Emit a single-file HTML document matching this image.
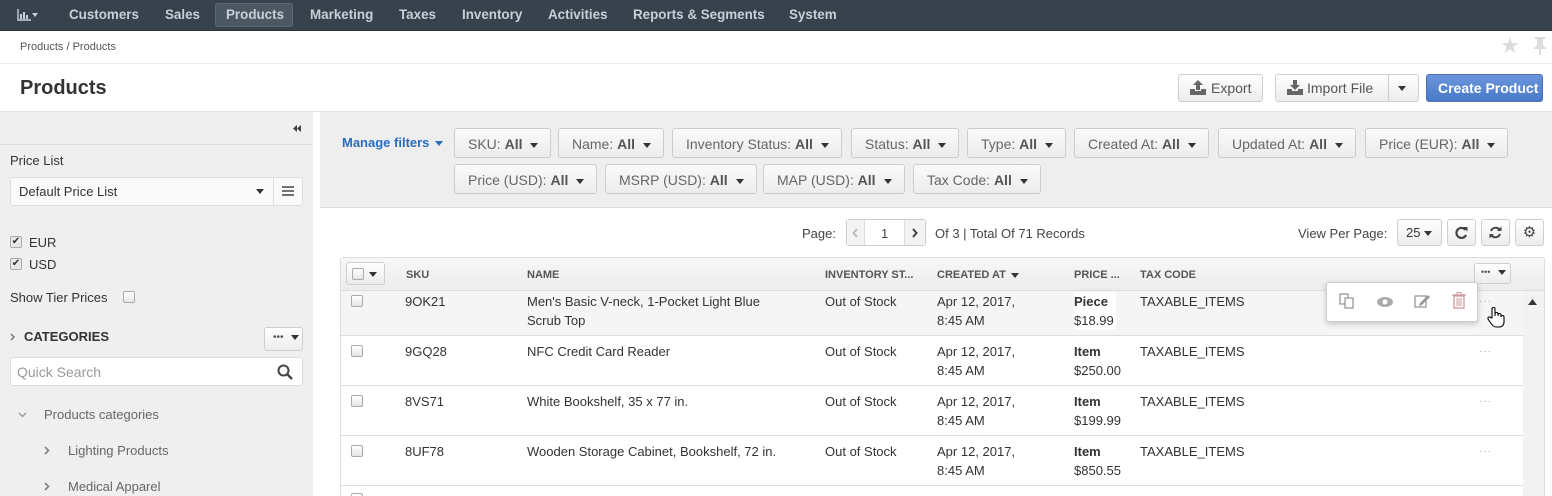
<!DOCTYPE html>
<html><head><meta charset="utf-8"><style>
*{box-sizing:border-box;margin:0;padding:0}
html,body{width:1552px;height:496px;overflow:hidden}
body{font-family:"Liberation Sans",Arial,sans-serif;font-size:13px;color:#444;background:#fff;position:relative}
.a{position:absolute;white-space:nowrap}
.nav{left:0;top:0;width:1552px;height:31px;background:#37424c;border-bottom:1px solid #2a333b}
.ni{position:absolute;top:7px;font-weight:bold;font-size:13.4px;color:#c6d0da}
.btn{position:absolute;border:1px solid #cfcfcf;border-radius:3px;background:linear-gradient(#fff,#ececec);color:#555;font-size:14px}
.flt{position:absolute;height:30px;border:1px solid #ccc;border-radius:3px;background:linear-gradient(#fafafa,#ececec);font-size:14px;color:#666;padding:7px 12px 0 13px}
.flt b{color:#555}
.car{display:inline-block;width:0;height:0;border-left:4px solid transparent;border-right:4px solid transparent;border-top:5px solid #333;vertical-align:middle;margin-left:8px}
.cb{position:absolute;width:12px;height:12px;border:1px solid #aaa;border-radius:2px;background:linear-gradient(#fff,#e5e5e5)}
.th{position:absolute;top:269px;font-size:11px;font-weight:bold;color:#555}
.row{position:absolute;left:341px;width:1182px;border-bottom:1px solid #ddd}
.t{position:absolute;font-size:13px;color:#333;line-height:19px}
.dots{position:absolute;left:1479px;font-size:10px;color:#aaa;letter-spacing:1px}
</style></head><body>
<div class="a nav">
 <svg class="a" style="left:17px;top:9px" width="14" height="12"><path d="M1 0V11H14" fill="none" stroke="#c6d0da" stroke-width="1.4"/><rect x="3" y="5" width="2" height="5" fill="#c6d0da"/><rect x="6" y="3" width="2" height="7" fill="#c6d0da"/><rect x="9" y="6" width="2" height="4" fill="#c6d0da"/></svg>
 <span class="car" style="position:absolute;left:32px;top:13px;margin:0;border-top-color:#c6d0da;border-left-width:3px;border-right-width:3px;border-top-width:4px"></span>
 <div class="ni" style="left:69px">Customers</div>
 <div class="ni" style="left:165px">Sales</div>
 <div class="a" style="left:215px;top:3px;width:78px;height:24px;background:#4b5761;border:1px solid #5c6872;border-radius:3px"></div>
 <div class="ni" style="left:226px">Products</div>
 <div class="ni" style="left:310px">Marketing</div>
 <div class="ni" style="left:399px">Taxes</div>
 <div class="ni" style="left:462px">Inventory</div>
 <div class="ni" style="left:548px">Activities</div>
 <div class="ni" style="left:633px">Reports &amp; Segments</div>
 <div class="ni" style="left:789px">System</div>
</div>
<div class="a" style="left:20px;top:41px;font-size:11px;color:#555">Products / Products</div>
<svg class="a" style="left:1501px;top:37px" width="18" height="17"><path d="M9 0L11.1 6.1H17.6L12.3 9.9L14.3 16.2L9 12.3L3.7 16.2L5.7 9.9L0.4 6.1H6.9Z" fill="#ddd"/></svg>
<svg class="a" style="left:1533px;top:37px" width="14" height="18"><path d="M2 0H12V2H10V8L13 11V12H8V18H6V12H1V11L4 8V2H2Z" fill="#ddd"/></svg>
<div class="a" style="left:0;top:63px;width:1552px;height:1px;background:#eee"></div>
<div class="a" style="left:20px;top:77px;font-size:20px;font-weight:bold;color:#333">Products</div>
<div class="btn" style="left:1178px;top:74px;width:85px;height:28px;padding:5px 0 0 32px">Export</div>
<svg class="a" style="left:1190px;top:80px" width="16" height="15"><path d="M8 0L13 5H10V10H6V5H3Z" fill="#666"/><path d="M0 9H5V11H11V9H16V15H0Z" fill="#666"/></svg>
<div class="btn" style="left:1275px;top:74px;width:144px;height:28px;padding:5px 0 0 31px">Import File<span style="position:absolute;left:112px;top:0;height:26px;border-left:1px solid #ccc"></span><span class="car" style="position:absolute;left:114px;top:11px"></span></div>
<svg class="a" style="left:1287px;top:80px" width="16" height="15"><path d="M6 0H10V5H13L8 10L3 5H6Z" fill="#666"/><path d="M0 9H5V11H11V9H16V15H0Z" fill="#666"/></svg>
<div class="btn" style="left:1426px;top:74px;width:117px;height:28px;padding:5px 0 0 11px;background:linear-gradient(#6a96dc,#4a79c8);border-color:#4a72b5;color:#fff;font-weight:bold">Create Product</div>
<div class="a" style="left:0;top:111px;width:1552px;height:1px;background:#e2e2e2"></div>
<!-- sidebar -->
<div class="a" style="left:0;top:112px;width:313px;height:384px;background:#efefef"></div>
<div class="a" style="left:0;top:144px;width:313px;height:1px;background:#ddd"></div>
<svg class="a" style="left:293px;top:125px" width="9" height="7"><path d="M4 0V7L0 3.5Z M8 0V7L4 3.5Z" fill="#444"/></svg>
<div class="a" style="left:10px;top:153px;color:#333">Price List</div>
<div class="a" style="left:10px;top:177px;width:293px;height:29px;border:1px solid #ddd;border-radius:3px;background:#fafafa"></div>
<div class="a" style="left:19px;top:184px;color:#333">Default Price List</div>
<div class="car a" style="left:248px;top:189px"></div>
<div class="a" style="left:273px;top:177px;width:1px;height:29px;background:#ddd"></div>
<svg class="a" style="left:282px;top:186px" width="12" height="10"><path d="M0 1H12M0 5H12M0 9H12" stroke="#444" stroke-width="1.6"/></svg>
<div class="cb" style="left:10px;top:236px;background:#e8e8e8;font-size:10px;line-height:10px;text-align:center;color:#333">&#10004;</div>
<div class="a" style="left:29px;top:235px;color:#333">EUR</div>
<div class="cb" style="left:10px;top:258px;background:#e8e8e8;font-size:10px;line-height:10px;text-align:center;color:#333">&#10004;</div>
<div class="a" style="left:29px;top:257px;color:#333">USD</div>
<div class="a" style="left:10px;top:290px;color:#333">Show Tier Prices</div>
<div class="cb" style="left:123px;top:291px"></div>
<svg class="a" style="left:10px;top:333px" width="6" height="8"><path d="M1 1L4 4L1 7" fill="none" stroke="#777" stroke-width="1.4"/></svg>
<div class="a" style="left:24px;top:329px;font-weight:bold;font-size:13px;color:#333">CATEGORIES</div>
<div class="btn" style="left:264px;top:327px;width:39px;height:24px;font-size:10px;padding:4px 0 0 8px">&bull;&bull;&bull;<span class="car" style="margin-left:7px"></span></div>
<div class="a" style="left:10px;top:357px;width:293px;height:29px;border:1px solid #ddd;border-radius:3px;background:#fff"></div>
<div class="a" style="left:17px;top:364px;font-size:14px;color:#999">Quick Search</div>
<svg class="a" style="left:277px;top:364px" width="16" height="16"><circle cx="6.5" cy="6.5" r="5" fill="none" stroke="#444" stroke-width="2"/><line x1="10" y1="10" x2="15" y2="15" stroke="#444" stroke-width="2.4"/></svg>
<svg class="a" style="left:18px;top:412px" width="9" height="6"><path d="M1 1L4.5 4.5L8 1" fill="none" stroke="#999" stroke-width="1.4"/></svg>
<div class="a" style="left:44px;top:407px;color:#666">Products categories</div>
<svg class="a" style="left:44px;top:446px" width="6" height="9"><path d="M1 1L4.5 4.5L1 8" fill="none" stroke="#777" stroke-width="1.5"/></svg>
<div class="a" style="left:68px;top:443px;color:#666">Lighting Products</div>
<svg class="a" style="left:44px;top:482px" width="6" height="9"><path d="M1 1L4.5 4.5L1 8" fill="none" stroke="#777" stroke-width="1.5"/></svg>
<div class="a" style="left:68px;top:479px;color:#666">Medical Apparel</div>
<!-- filters -->
<div class="a" style="left:320px;top:112px;width:1232px;height:96px;background:#eee;border-bottom:1px solid #ddd"></div>
<div class="a" style="left:342px;top:135px;color:#2a6dc0;font-weight:bold;font-size:13px">Manage filters <span class="car" style="margin-left:2px;border-top-color:#2a6dc0"></span></div>
<div class="flt" style="left:454px;top:128px">SKU: <b>All</b><span class="car"></span></div>
<div class="flt" style="left:558px;top:128px">Name: <b>All</b><span class="car"></span></div>
<div class="flt" style="left:672px;top:128px">Inventory Status: <b>All</b><span class="car"></span></div>
<div class="flt" style="left:851px;top:128px">Status: <b>All</b><span class="car"></span></div>
<div class="flt" style="left:967px;top:128px">Type: <b>All</b><span class="car"></span></div>
<div class="flt" style="left:1074px;top:128px">Created At: <b>All</b><span class="car"></span></div>
<div class="flt" style="left:1218px;top:128px">Updated At: <b>All</b><span class="car"></span></div>
<div class="flt" style="left:1365px;top:128px">Price (EUR): <b>All</b><span class="car"></span></div>
<div class="flt" style="left:454px;top:164px">Price (USD): <b>All</b><span class="car"></span></div>
<div class="flt" style="left:605px;top:164px">MSRP (USD): <b>All</b><span class="car"></span></div>
<div class="flt" style="left:763px;top:164px">MAP (USD): <b>All</b><span class="car"></span></div>
<div class="flt" style="left:913px;top:164px">Tax Code: <b>All</b><span class="car"></span></div>
<!-- pager -->
<div class="a" style="left:802px;top:226px;color:#444">Page:</div>
<div class="a" style="left:846px;top:219px;width:80px;height:27px;border:1px solid #ccc;border-radius:3px;background:#fff"></div>
<div class="a" style="left:847px;top:220px;width:18px;height:25px;background:#f3f3f3;border-right:1px solid #ddd"></div>
<svg class="a" style="left:852px;top:228px" width="7" height="10"><path d="M5 1L1.5 5L5 9" fill="none" stroke="#bbb" stroke-width="2"/></svg>
<div class="a" style="left:881px;top:226px;color:#444">1</div>
<div class="a" style="left:904px;top:220px;width:21px;height:25px;background:#f3f3f3;border-left:1px solid #ddd"></div>
<svg class="a" style="left:911px;top:228px" width="7" height="10"><path d="M2 1L5.5 5L2 9" fill="none" stroke="#444" stroke-width="2"/></svg>
<div class="a" style="left:935px;top:226px;color:#444">Of 3 | Total Of 71 Records</div>
<div class="a" style="left:1298px;top:226px;color:#444">View Per Page:</div>
<div class="btn" style="left:1397px;top:219px;width:45px;height:27px;font-size:13px;padding:5px 0 0 8px;color:#333">25<span class="car" style="margin-left:4px"></span></div>
<div class="btn" style="left:1447px;top:219px;width:29px;height:27px"></div>
<svg class="a" style="left:1455px;top:226px" width="13" height="13"><path d="M10.5 4A5 5 0 1 0 11 9" fill="none" stroke="#444" stroke-width="2.2"/><path d="M8 1H12.5V5.5Z" fill="#444"/></svg>
<div class="btn" style="left:1481px;top:219px;width:29px;height:27px"></div>
<svg class="a" style="left:1489px;top:226px" width="13" height="13"><path d="M2 5A5 5 0 0 1 10.5 3.5M11 8A5 5 0 0 1 2.5 9.5" fill="none" stroke="#444" stroke-width="2"/><path d="M12.5 0.5V5H8Z M0.5 12.5V8H5Z" fill="#444"/></svg>
<div class="btn" style="left:1515px;top:219px;width:29px;height:27px;font-size:15px;text-align:center;padding-top:3px;color:#444">&#9881;</div>
<!-- table -->
<div class="a" style="left:340px;top:257px;width:1205px;height:239px;border:1px solid #ddd;border-bottom:none;border-radius:3px 3px 0 0"></div>
<div class="a" style="left:341px;top:258px;width:1203px;height:33px;background:linear-gradient(#f7f7f7,#ececec);border-bottom:1px solid #ddd"></div>
<div class="a" style="left:1523px;top:291px;width:21px;height:205px;background:#f2f2f2"></div>
<svg class="a" style="left:1528px;top:299px" width="9" height="6"><path d="M0 6L4.5 0L9 6Z" fill="#333"/></svg>
<div class="btn" style="left:346px;top:262px;width:39px;height:23px;padding:0"><div class="cb" style="left:5px;top:5px"></div><span class="car" style="position:absolute;left:22px;top:9px;margin:0"></span></div>
<div class="th" style="left:406px">SKU</div>
<div class="th" style="left:527px">NAME</div>
<div class="th" style="left:825px">INVENTORY ST...</div>
<div class="th" style="left:937px">CREATED AT <span class="car" style="margin-left:2px"></span></div>
<div class="th" style="left:1074px">PRICE ...</div>
<div class="th" style="left:1140px">TAX CODE</div>
<div class="btn" style="left:1474px;top:263px;width:37px;height:21px;font-size:9px;padding:3px 0 0 6px">&bull;&bull;&bull;<span class="car"></span></div>

<div class="row" style="top:291px;height:45px;background:#f5f5f5"></div>
<div class="row" style="top:336px;height:50px"></div>
<div class="row" style="top:386px;height:50px"></div>
<div class="row" style="top:436px;height:50px"></div>

<div class="cb" style="left:351px;top:295px"></div>
<div class="t" style="left:405px;top:292px">9OK21</div>
<div class="t" style="left:527px;top:292px">Men's Basic V-neck, 1-Pocket Light Blue<br>Scrub Top</div>
<div class="t" style="left:825px;top:292px">Out of Stock</div>
<div class="t" style="left:937px;top:292px">Apr 12, 2017,<br>8:45 AM</div>
<div class="t" style="left:1074px;top:292px;background:#fff;padding-right:2px"><b>Piece</b><br>$18.99</div>
<div class="t" style="left:1140px;top:292px">TAXABLE_ITEMS</div>

<div class="cb" style="left:351px;top:345px"></div>
<div class="t" style="left:405px;top:342px">9GQ28</div>
<div class="t" style="left:527px;top:342px">NFC Credit Card Reader</div>
<div class="t" style="left:825px;top:342px">Out of Stock</div>
<div class="t" style="left:937px;top:342px">Apr 12, 2017,<br>8:45 AM</div>
<div class="t" style="left:1074px;top:342px"><b>Item</b><br>$250.00</div>
<div class="t" style="left:1140px;top:342px">TAXABLE_ITEMS</div>
<div class="dots" style="top:346px">&middot;&middot;&middot;</div>

<div class="cb" style="left:351px;top:395px"></div>
<div class="t" style="left:405px;top:392px">8VS71</div>
<div class="t" style="left:527px;top:392px">White Bookshelf, 35 x 77 in.</div>
<div class="t" style="left:825px;top:392px">Out of Stock</div>
<div class="t" style="left:937px;top:392px">Apr 12, 2017,<br>8:45 AM</div>
<div class="t" style="left:1074px;top:392px"><b>Item</b><br>$199.99</div>
<div class="t" style="left:1140px;top:392px">TAXABLE_ITEMS</div>
<div class="dots" style="top:396px">&middot;&middot;&middot;</div>

<div class="cb" style="left:351px;top:445px"></div>
<div class="t" style="left:405px;top:442px">8UF78</div>
<div class="t" style="left:527px;top:442px">Wooden Storage Cabinet, Bookshelf, 72 in.</div>
<div class="t" style="left:825px;top:442px">Out of Stock</div>
<div class="t" style="left:937px;top:442px">Apr 12, 2017,<br>8:45 AM</div>
<div class="t" style="left:1074px;top:442px"><b>Item</b><br>$850.55</div>
<div class="t" style="left:1140px;top:442px">TAXABLE_ITEMS</div>
<div class="dots" style="top:446px">&middot;&middot;&middot;</div>
<div class="a" style="left:351px;top:493px;width:12px;height:3px;border:1px solid #aaa;border-bottom:none;border-radius:2px 2px 0 0"></div>

<div class="dots" style="top:296px">&middot;&middot;&middot;</div>
<!-- action popup -->
<div class="a" style="left:1326px;top:282px;width:152px;height:40px;background:#fff;border:1px solid #ccc;border-radius:3px;box-shadow:0 2px 6px rgba(0,0,0,.2)"></div>
<svg class="a" style="left:1339px;top:293px" width="16" height="17"><rect x="1" y="1" width="8" height="10" fill="none" stroke="#999" stroke-width="1.3"/><rect x="6" y="5" width="8" height="10" fill="#fff" stroke="#999" stroke-width="1.3"/></svg>
<svg class="a" style="left:1376px;top:296px" width="18" height="12"><ellipse cx="9" cy="6" rx="8" ry="5" fill="#aaa"/><circle cx="9" cy="6" r="2.5" fill="#fff"/></svg>
<svg class="a" style="left:1414px;top:293px" width="17" height="16"><rect x="1" y="3" width="11" height="11" fill="none" stroke="#999" stroke-width="1.3"/><path d="M6 10 L14 2 L16 4 L8 12 L5 13 Z" fill="#999"/></svg>
<svg class="a" style="left:1452px;top:292px" width="14" height="17"><rect x="2" y="4" width="10" height="12" fill="none" stroke="#c99" stroke-width="1.3"/><line x1="0" y1="3" x2="14" y2="3" stroke="#c99" stroke-width="1.3"/><rect x="5" y="0.5" width="4" height="2.5" fill="none" stroke="#c99"/><line x1="5" y1="6" x2="5" y2="14" stroke="#c99"/><line x1="7" y1="6" x2="7" y2="14" stroke="#c99"/><line x1="9" y1="6" x2="9" y2="14" stroke="#c99"/></svg>
<svg class="a" style="left:1487px;top:306px" width="18" height="22"><path d="M5 12 V3 a1.5 1.5 0 0 1 3 0 V10 V8 a1.5 1.5 0 0 1 3 0 V10 V9 a1.5 1.5 0 0 1 3 0 V11 a1.5 1.5 0 0 1 3 0 V16 C17 19 15 21 12 21 H9 C7 21 5 19 3 16 L1 13 a1.5 1.5 0 0 1 3 -1 Z" fill="#fff" stroke="#000" stroke-width="1.1"/></svg>
</body></html>
